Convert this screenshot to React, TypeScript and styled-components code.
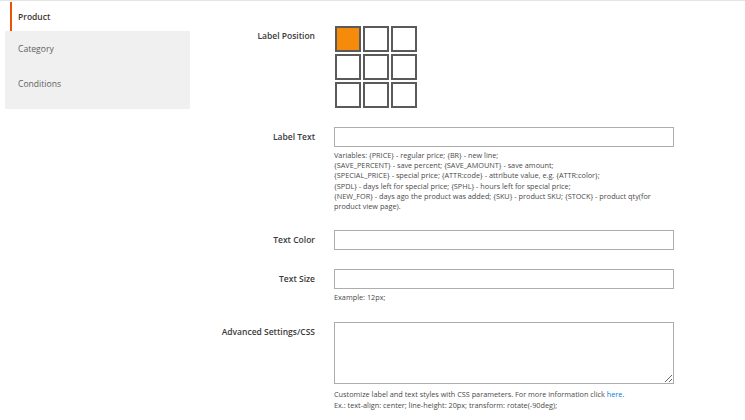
import React from 'react';
import styled, { createGlobalStyle } from 'styled-components';

const GlobalStyle = createGlobalStyle`
  html, body {
    margin: 0;
    padding: 0;
    background: #fff;
    font-family: 'Open Sans', 'Liberation Sans', sans-serif;
    color: #303030;
  }
  * {
    box-sizing: border-box;
  }
`;

const tabs = [
  { name: 'Product', active: true },
  { name: 'Category', active: false },
  { name: 'Conditions', active: false },
];

const labelTextNote = [
  'Variables: {PRICE} - regular price; {BR} - new line;',
  '{SAVE_PERCENT} - save percent; {SAVE_AMOUNT} - save amount;',
  '{SPECIAL_PRICE} - special price; {ATTR:code} - attribute value, e.g. {ATTR:color};',
  '{SPDL} - days left for special price; {SPHL} - hours left for special price;',
  '{NEW_FOR} - days ago the product was added; {SKU} - product SKU; {STOCK} - product qty(for',
  'product view page).',
];

const App = () => {
  return (
    <Page>
      <GlobalStyle />
      <Sidebar>
        <ActiveTab>{tabs[0].name}</ActiveTab>
        <TabGroup>
          {tabs
            .filter((t) => !t.active)
            .map((t) => (
              <Tab key={t.name}>{t.name}</Tab>
            ))}
        </TabGroup>
      </Sidebar>

      <Main>
        <Row>
          <Label>Label Position</Label>
          <PositionGrid>
            {Array.from({ length: 9 }).map((_, i) => (
              <Cell key={i} $active={i === 0} />
            ))}
          </PositionGrid>
        </Row>

        <Row>
          <Label>Label Text</Label>
          <Control>
            <Input type="text" />
            <Note>
              {labelTextNote.map((line) => (
                <NoteLine key={line}>{line}</NoteLine>
              ))}
            </Note>
          </Control>
        </Row>

        <Row>
          <Label>Text Color</Label>
          <Control>
            <Input type="text" />
          </Control>
        </Row>

        <Row $space={20}>
          <Label>Text Size</Label>
          <Control>
            <Input type="text" />
            <Note>
              <NoteLine>Example: 12px;</NoteLine>
            </Note>
          </Control>
        </Row>

        <Row>
          <Label>Advanced Settings/CSS</Label>
          <Control>
            <TextArea />
            <Note $offset={5}>
              <NoteLine>
                Customize label and text styles with CSS parameters. For more information click{' '}
                <Link href="#">here</Link>.
              </NoteLine>
              <NoteLine>Ex.: text-align: center; line-height: 20px; transform: rotate(-90deg);</NoteLine>
            </Note>
          </Control>
        </Row>
      </Main>
    </Page>
  );
};

export default App;

const Page = styled.div`
  display: flex;
  align-items: flex-start;
  width: 745px;
  min-height: 420px;
  padding-left: 5px;
  border-top: 1px solid #e6e6e6;
`;

const Sidebar = styled.div`
  width: 185px;
  flex-shrink: 0;
  padding-top: 1px;
`;

const ActiveTab = styled.div`
  height: 29px;
  margin-left: 5px;
  padding-left: 6px;
  display: flex;
  align-items: center;
  border-left: 2px solid #eb5202;
  font-size: 8.5px;
  font-weight: 600;
  color: #41362f;
`;

const TabGroup = styled.div`
  background: #f0f0f0;
  padding-bottom: 8px;
`;

const Tab = styled.div`
  height: 35px;
  padding-left: 13px;
  display: flex;
  align-items: center;
  font-size: 8.6px;
  color: #5f5f5f;
`;

const Main = styled.div`
  display: flex;
  flex-direction: column;
  padding-top: 25px;
`;

const Row = styled.div<{ $space?: number }>`
  display: grid;
  grid-template-columns: 125px 340px;
  column-gap: 19px;
  margin-bottom: ${(p) => p.$space ?? 19}px;
`;

const Label = styled.div`
  text-align: right;
  line-height: 20px;
  font-size: 8.5px;
  font-weight: 600;
  color: #3a3a3a;
  white-space: nowrap;
`;

const PositionGrid = styled.div`
  display: grid;
  grid-template-columns: repeat(3, 26px);
  grid-auto-rows: 26px;
  gap: 2px;
  margin-left: 1px;
`;

const Cell = styled.div<{ $active: boolean }>`
  border: 2px solid #5a5a5a;
  background: ${(p) => (p.$active ? '#f68a0b' : '#fff')};
`;

const Control = styled.div`
  display: flex;
  flex-direction: column;
`;

const Input = styled.input`
  width: 340px;
  height: 20px;
  margin: 0;
  border: 1px solid #adadad;
  background: #fff;
  font-family: inherit;
  font-size: 8.4px;
  outline: none;
`;

const TextArea = styled.textarea`
  width: 340px;
  height: 62px;
  margin: 0;
  border: 1px solid #adadad;
  background: #fff;
  font-family: inherit;
  font-size: 8.4px;
  outline: none;
  display: block;
`;

const Note = styled.div<{ $offset?: number }>`
  margin-top: ${(p) => p.$offset ?? 3}px;
  font-size: 7.3px;
  line-height: 10.2px;
  color: #4a4a4a;
`;

const NoteLine = styled.div`
  white-space: nowrap;
`;

const Link = styled.a`
  color: #007bdb;
  text-decoration: none;
`;
